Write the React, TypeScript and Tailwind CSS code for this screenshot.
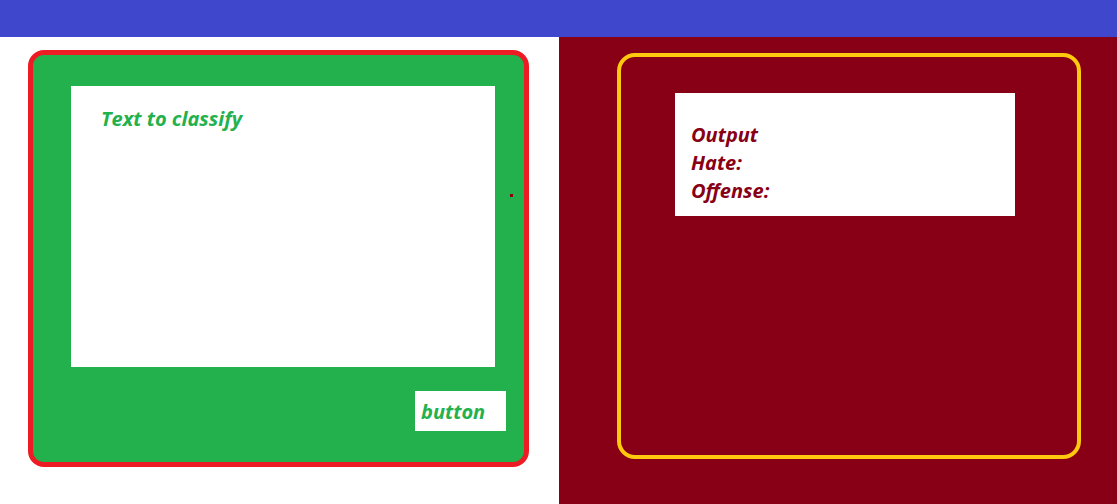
export default function App() {
  return (
    <div className="w-[1117px] h-[504px] flex flex-col font-['Open_Sans',sans-serif] italic font-bold">
      {/* top bar */}
      <div className="h-[37px] bg-[#3f48cc]" />

      <div className="flex flex-1">
        {/* left side */}
        <div className="w-[559px] bg-white pl-[28px] pt-[13px]">
          <div className="relative w-[501px] h-[417px] border-[5px] border-[#ed1c24] rounded-[16px] bg-[#22b14c] pl-[38px] pt-[31px]">
            <div className="w-[424px] h-[281px] bg-white pl-[30px] pt-[19px]">
              <p className="text-[20px] leading-[28px] text-[#22b14c]">Text to classify</p>
            </div>
            <div className="flex justify-start mt-[24px] ml-[344px]">
              <button className="w-[91px] h-[40px] bg-white text-left pl-[6px] pt-[1px] text-[20px] leading-[28px] text-[#22b14c] italic font-bold">
                button
              </button>
            </div>
            <span className="absolute left-[477px] top-[139px] w-[3px] h-[3px] bg-[#880015]" />
          </div>
        </div>

        {/* right side */}
        <div className="flex-1 bg-[#880015] pl-[58px] pt-[16px]">
          <div className="w-[464px] h-[406px] border-[4px] border-[#ffc90e] rounded-[18px] pl-[54px] pt-[36px]">
            <div className="w-[340px] h-[123px] bg-white pl-[16px] pt-[28px] text-[20px] leading-[28px] text-[#880015]">
              <p>Output</p>
              <p>Hate:</p>
              <p>Offense:</p>
            </div>
          </div>
        </div>
      </div>
    </div>
  )
}
